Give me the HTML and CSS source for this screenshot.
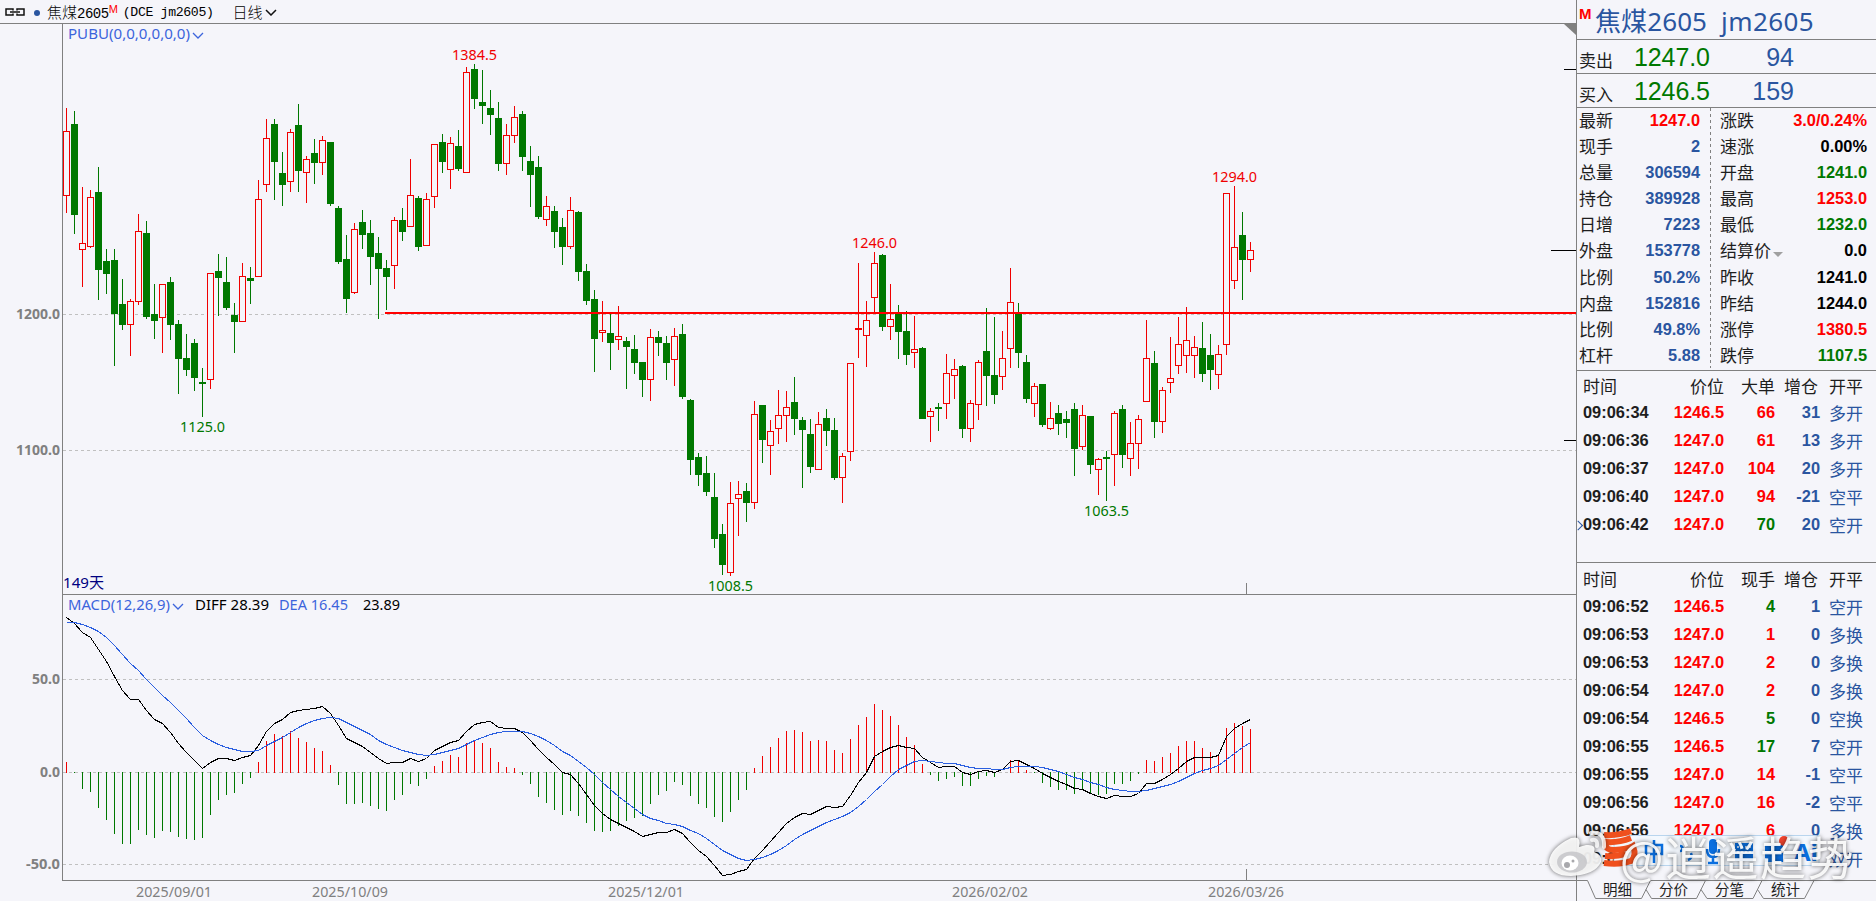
FILE: index.html
```
<!DOCTYPE html>
<html lang="zh-CN">
<head>
    <meta charset="UTF-8">
    <meta name="viewport" content="width=device-width, initial-scale=1.0">
    <title>焦煤2605 日线</title>
    <link rel="stylesheet" href="styles.css">
</head>
<body>

<div class="chart-side">
    <div class="toolbar">
        <svg class="link-icon" width="20" height="8" viewBox="0 0 20 8">
            <path d="M8 2.500V1H1v6h7v-1.500M12 2.500V1h7v6h-7v-1.500M5 4h10" />
        </svg>
        <span class="dot"></span>
        <span class="name">焦煤<span class="mono">2605</span></span><sup>M</sup>
        <span class="mono code">(DCE jm2605)</span>
        <span class="period">日线</span>
        <svg class="chev" width="12" height="7" viewBox="0 0 12 7"><path d="M1 1l5 5l5-5" /></svg>
    </div>
    <svg class="pane" id="price-pane" width="1576" height="571" viewBox="0 24 1576 571"></svg>
    <svg class="pane" id="macd-pane" width="1576" height="306" viewBox="0 595 1576 306"></svg>
</div>

<div class="quote-side">
    <div class="title"><b>M</b><span>焦煤2605</span><span>jm2605</span></div>
    <div class="order"><span>卖出</span><em>1247.0</em><i>94</i></div>
    <div class="order"><span>买入</span><em>1246.5</em><i>159</i></div>
    <div class="quotes">
        <div class="col" id="quote-left"></div>
        <div class="col" id="quote-right"></div>
    </div>
    <div class="trades big" id="big-trades"></div>
    <div class="trades" id="all-trades"></div>
    <div class="tabs">
        <svg width="300" height="21" viewBox="0 0 300 21">
            <path d="M0 .5H11.500L19.500 18.500H65.500L74.500 .5M70 9.500L75.500 18.500H120.500L129.500 .5M125 9.500L131 18.500H177L186 .5M181.500 9.500L187.500 18.500H228.500L238 .5M74.500 .5H300" />
        </svg>
        <div class="tab-names"><span>明细</span><span>分价</span><span>分笔</span><span>统计</span></div>
    </div>
</div>

<!-- 输入法工具条 -->
<div class="ime">
    <svg width="250" height="44" viewBox="0 0 250 44">
        <rect x="14" y="9.500" width="205" height="30" rx="3" fill="#f3f8fe" stroke="#b9d5ee" />
        <g class="ime-logo">
            <path d="M4 9Q18 10 31 5M31 12Q18 17 6 16Q4 24 14 24Q28 23 33 20Q37 30 31 35Q20 39 4 37M5 30Q16 31 26 28" />
        </g>
        <g class="ime-blue">
            <path d="M46 19h16v9h-16zM54 14v23" />
            <path d="M80 20a2.500 2.500 0 1 1 0 5M91 27q2 5-3 7" />
            <path d="M107 23q0 8 6 8t6-8M113 31v6M108 37h10" />
        </g>
        <rect x="109" y="13" width="8" height="15" rx="4" fill="#0a6fe0" />
        <path d="M135 17h18v18h-18z" fill="#0a6fe0" />
        <path d="M137 21h14M137 26h14" stroke="#f3f8fe" stroke-width="1.500" stroke-dasharray="2 2" />
        <path d="M165 19h18v6h-18zM165 27h8v9h-8zM175 27h8v9h-8z" fill="#0a6fe0" />
        <circle cx="184" cy="15" r="5" fill="#f0442e" />
        <text x="194" y="35" class="ime-ai">Ai</text>
    </svg>
</div>

<div class="watermark">
    <svg width="60" height="50" viewBox="0 0 60 50">
        <path d="M24 8Q3 18 2 32Q4 46 24 46Q48 45 54 32Q56 25 47 22Q50 14 39 15L32 17Q35 5 24 8Z" fill="#fff" fill-opacity=".9" />
        <ellipse cx="25" cy="32" rx="15" ry="10.500" fill="#c0c0c4" fill-opacity=".75" />
        <ellipse cx="23" cy="33" rx="8.500" ry="7.500" fill="#fff" />
        <circle cx="20" cy="35" r="3" fill="#a8a8ac" />
        <circle cx="26" cy="31" r="1.500" fill="#a8a8ac" />
        <path d="M44 3Q58 1 57 17M45 10Q51 9 50 16" class="wave" />
    </svg>
    <span>@逍遥趋势</span>
</div>

<script src="chart.js"></script>
</body>
</html>
```
FILE: styles.css
```
* {
    box-sizing: border-box;
}
body {
    margin: 0;
    display: flex;
    width: 1876px;
    height: 901px;
    overflow: hidden;
    position: relative;
    background-color: #f5f5fa;
    color: #1e1e1e;
    font-family: "Liberation Sans", "Noto Sans CJK SC", sans-serif;
}
.chart-side {
    width: 1576px;
    flex: none;
}
.toolbar {
    height: 24px;
    display: flex;
    align-items: center;
    border-bottom: 1px solid #808080;
    padding-left: 5px;
    font: 300 15px "Noto Sans CJK SC", sans-serif;
    color: #000;
}
.toolbar svg {
    fill: none;
    stroke: #111;
    stroke-width: 1.5;
}
.mono {
    font: 13.200px "Liberation Mono", monospace;
    letter-spacing: -0.35px;
}
.dot {
    width: 6px;
    height: 6px;
    border-radius: 50%;
    background-color: #2a55a0;
    margin: 2px 7px 0 9px;
}
.name .mono {
    font-size: 14px;
    letter-spacing: -0.5px;
}
.toolbar sup {
    color: #f00;
    font: 11px "Liberation Sans", sans-serif;
    align-self: flex-start;
    margin-top: 3px;
}
.code {
    margin-left: 5px;
    margin-top: 2px;
}
.period {
    margin-left: 19px;
}
.toolbar .chev {
    margin: 2px 0 0 2px;
}
.pane {
    display: block;
}
.pane text {
    font-family: "Noto Sans", "Noto Sans CJK SC", sans-serif;
    font-size: 15px;
}
.pane .axis {
    font-weight: bold;
    font-size: 14px;
    fill: #808080;
}
.pane .date {
    fill: #808080;
}
.frame {
    stroke: #808080;
    fill: none;
    shape-rendering: crispEdges;
}
.grid {
    stroke: #c0c0c0;
    stroke-dasharray: 3 3;
    shape-rendering: crispEdges;
}
.tick {
    stroke: #000;
    shape-rendering: crispEdges;
}
.support {
    fill: #f00;
}
.up {
    fill: #f00000;
}
.hollow {
    fill: #f5f5fa;
    stroke: #f00000;
}
.down {
    fill: #007800;
}
.diff, .dea {
    fill: none;
    stroke: #000;
    shape-rendering: crispEdges;
}
.dea {
    stroke: #2b5fe0;
}
.chev-blue {
    fill: none;
    stroke: #3c64dc;
    stroke-width: 1.3;
}

/* 右侧报价 */
.quote-side {
    width: 300px;
    flex: none;
    border-left: 1px solid #808080;
    display: flex;
    flex-direction: column;
}
.title {
    height: 40px;
    display: flex;
    border-bottom: 1px solid #808080;
    color: #2a55a0;
    font-size: 26px;
    line-height: 42px;
}
.title span {
    font-family: "Noto Sans", "Noto Sans CJK SC", sans-serif;
    letter-spacing: 0.1px;
    margin-right: 14px;
}
.title span:last-child {
    letter-spacing: 0.4px;
}
.title b {
    color: #f00;
    font: bold 15px/28px "Liberation Sans", sans-serif;
    width: 18px;
    padding-left: 2px;
}
.order {
    height: 34px;
    display: flex;
    border-bottom: 1px solid #808080;
    padding-left: 2px;
    line-height: 35px;
}
.order span {
    width: 55px;
    font: 17px/40px "Noto Sans CJK SC", sans-serif;
}
.order em, .order i {
    font-style: normal;
    font-size: 25px;
}
.order em {
    width: 77px;
    color: #007800;
    letter-spacing: -0.1px;
}
.order i {
    width: 83px;
    text-align: right;
    color: #2a55a0;
}
.quotes {
    height: 263px;
    display: flex;
    border-bottom: 1px solid #808080;
}
.col {
    width: 134px;
    padding: 0 11px 0 2px;
    background: repeating-linear-gradient(#808080 0 3px, transparent 3px 6px) right top / 1px 260px no-repeat;
}
.col + .col {
    width: 165px;
    padding: 0 9px 0 9px;
    background: none;
}
.quote {
    height: 26.100px;
    display: flex;
    justify-content: space-between;
    font-size: 16.4px;
    line-height: 25px;
    font-weight: bold;
}
.quote span, .trade span:last-child, .head span {
    font: 17px/23px "Noto Sans CJK SC", sans-serif;
}
.quote .more::after {
    content: "";
    display: inline-block;
    border: 5.500px solid transparent;
    border-top-color: #a0a0a0;
    border-bottom: 0;
    margin-left: 2px;
}
.red {
    color: #f00;
}
.green {
    color: #007800;
}
.blue {
    color: #2a55a0;
}
.black {
    color: #000;
}
.trades {
    padding-left: 6px;
    padding-top: 4px;
    height: 317px;
}
.trades.big {
    height: 192px;
    padding-top: 3px;
    border-bottom: 1px solid #808080;
}
#all-trades .head {
    height: 26px;
}
.trade {
    position: relative;
    display: grid;
    grid-template-columns: 68px 73px 51px 45px 34px;
    height: 28px;
    font-size: 16.4px;
    line-height: 27px;
    font-weight: bold;
    text-align: right;
}
.trade span:nth-child(4) {
    color: #2a55a0;
}
.trade span:first-child {
    text-align: left;
}
.trade span:last-child {
    color: #2a55a0;
    line-height: 27px;
    margin-left: 8px;
    width: 35px;
}
.head {
    height: 25px;
}
.head span, .head span:last-child, .head span:nth-child(4) {
    color: #1e1e1e;
    line-height: 23px;
}
.head span:nth-child(4) {
    margin-right: 2px;
}
.marker::before {
    content: "";
    position: absolute;
    left: -7px;
    top: 11px;
    width: 6px;
    height: 6px;
    border: solid #2a55a0;
    border-width: 1px 1px 0 0;
    transform: rotate(45deg) translate(-1px, 1px);
}
.tabs {
    height: 21px;
    display: grid;
    margin-left: -1px;
}
.tabs > * {
    grid-area: 1 / 1;
}
.tabs path {
    fill: none;
    stroke: #808080;
}
.tab-names {
    display: flex;
    gap: 27px;
    padding-left: 27px;
    font: 14.500px/17px "Noto Sans CJK SC", sans-serif;
}

/* 浮层 */
.ime {
    position: absolute;
    left: 1600px;
    top: 826px;
}
.ime-logo {
    fill: none;
    stroke: #f0501e;
    stroke-width: 6;
}
.ime-blue {
    fill: none;
    stroke: #0a6fe0;
    stroke-width: 2.500;
}
.ime-ai {
    font: bold 24px "Noto Sans", sans-serif;
    fill: #0a6fe0;
}
.watermark {
    position: absolute;
    left: 1547px;
    top: 830px;
    display: flex;
    filter: drop-shadow(0 0 2px rgba(0, 0, 0, 0.65));
}
.watermark span {
    margin-left: 13px;
    font: 46px/50px "Noto Sans CJK SC", sans-serif;
    letter-spacing: 1.500px;
    color: rgba(255, 255, 255, 0.9);
    white-space: nowrap;
}
.wave {
    fill: none;
    stroke: #fff;
    stroke-opacity: 0.8;
    stroke-width: 4;
    stroke-linecap: round;
}
```
FILE: chart.js
```
const NS = 'http://www.w3.org/2000/svg';
const pricePane = document.getElementById('price-pane');
const macdPane = document.getElementById('macd-pane');
const firstX = 66;  // 第一根K线中心
const step = 8;     // K线间距
const zeroY = 772;

// 每根K线: 颜色 最高 实体上沿 实体下沿 最低
const candles = `
r108,131,196,213 g111,124,215,234 r187,243,250,287 r190,197,247,248 g167,192,270,300 g249,261,274,294
g249,260,314,366 g279,304,325,330 r299,301,325,356 r214,231,302,305 g221,233,317,319 g284,314,321,339
r284,284,318,353 g277,282,325,340 g320,324,359,394 g334,358,370,376 g339,343,378,391 g368,382,384,417
r273,273,380,389 g254,271,278,316 g257,282,308,310 g303,315,322,353 r263,276,322,322 g267,278,281,304
r180,199,277,277 r119,138,185,192 g119,124,162,200 g152,173,185,206 r129,132,182,192 g104,125,171,192
r156,159,173,203 g139,153,163,184 r136,140,163,175 g142,142,204,206 g206,208,262,264 g235,259,299,313
r223,229,293,294 g210,222,235,249 g220,233,257,285 g237,253,269,319 g260,268,277,310 r217,220,266,289
g208,220,232,241 r159,195,227,227 g196,198,247,251 r193,199,246,246 r144,144,197,208 g134,142,162,173
r137,143,170,189 g130,146,169,171 r67,72,173,173 g64,69,99,109 g70,102,106,124 g90,108,115,135
g102,118,164,171 r124,135,164,175 r106,117,136,143 g111,114,157,171 g146,161,175,207 g156,167,217,219
r196,206,220,226 g206,211,232,248 g218,227,247,265 r197,210,247,249 g211,212,272,281 g264,271,301,305
g290,299,339,372 r301,330,333,342 g314,333,343,370 r306,336,340,350 g337,341,347,389 g335,349,363,374
g362,362,380,397 r329,337,380,401 g331,337,343,356 g336,343,363,380 r328,336,360,386 g324,334,397,399
g399,400,460,475 g453,457,475,486 g456,473,492,496 g473,497,539,548 g524,534,565,575 r482,503,573,576
r481,494,499,536 g483,491,503,522 r401,414,503,509 g405,405,440,463 r420,431,446,475 r390,415,429,444
r391,407,416,442 g377,402,419,435 g417,420,430,488 g419,434,467,473 r412,424,470,470 g409,418,431,446
g418,430,478,480 r453,456,478,503 r363,363,452,461 r263,328,330,358 r301,320,336,367 r252,263,298,313
g254,255,327,331 r284,319,327,340 g305,313,332,359 g311,331,355,365 r316,349,353,368 g347,348,419,419
r408,411,417,442 g403,407,409,431 r354,373,404,419 r359,369,376,399 g365,366,429,438 r400,403,429,442
r360,362,405,420 g308,351,376,406 g317,375,395,404 r331,358,377,390 r268,302,349,368 g303,313,353,368
g355,362,399,403 r383,386,404,417 g384,384,425,427 r402,418,429,430 g405,413,424,435 g411,419,423,438
g403,409,449,476 r405,415,447,450 g416,416,465,474 r458,459,470,495 g451,457,459,501 r411,413,455,486
g405,409,455,468 r422,443,459,476 r415,419,444,469 r320,358,402,402 g351,363,422,438 r387,390,422,433
r337,378,383,393 r317,344,366,374 r307,340,356,373 r336,347,356,378 g322,348,374,382 g334,355,370,390
r345,354,375,389 r193,193,345,355 r186,247,281,289 g212,235,260,300 r242,250,260,272`.trim().split(/\s+/);

// MACD 柱的端点
const bars = [
    762, 773, 789, 792, 808, 820, 834, 844, 844, 830, 835, 838, 831, 832, 837, 839, 840, 838, 815, 800,
    795, 793, 784, 778, 762, 741, 734, 736, 731, 738, 742, 748, 751, 765, 785, 804, 804, 803, 806, 809,
    811, 800, 795, 784, 786, 779, 766, 761, 755, 757, 743, 740, 743, 748, 762, 767, 768, 775, 784, 797,
    803, 810, 815, 811, 816, 823, 831, 832, 831, 826, 821, 818, 816, 804, 795, 791, 782, 785, 796, 804,
    808, 817, 822, 812, 800, 790, 768, 756, 747, 738, 731, 730, 732, 741, 740, 741, 750, 753, 739, 725,
    717, 704, 710, 716, 725, 737, 745, 764, 775, 781, 779, 777, 786, 786, 779, 776, 777, 772, 760, 760,
    770, 773, 783, 787, 790, 790, 794, 790, 793, 795, 794, 784, 784, 781, 774, 760, 761, 757, 753, 746,
    741, 741, 748, 752, 755, 728, 723, 726, 729
];
const diff = [
    617, 623, 632, 637, 649, 661, 676, 690, 699, 699, 710, 719, 723, 732, 743, 752, 760, 768, 762, 758,
    758, 760, 757, 755, 745, 731, 723, 719, 712, 710, 709, 708, 706, 713, 725, 738, 742, 746, 752, 758,
    763, 762, 762, 758, 761, 758, 750, 746, 742, 740, 731, 724, 722, 721, 727, 728, 728, 732, 740, 749,
    757, 764, 772, 774, 783, 794, 805, 813, 819, 823, 827, 831, 836, 834, 832, 832, 829, 833, 842, 850,
    856, 865, 875, 874, 871, 869, 858, 850, 841, 832, 823, 817, 813, 814, 810, 806, 807, 806, 795, 782,
    772, 756, 751, 747, 745, 747, 748, 757, 762, 767, 766, 766, 772, 774, 771, 770, 772, 769, 761, 760,
    764, 768, 773, 777, 781, 784, 788, 789, 793, 796, 798, 795, 796, 796, 793, 783, 783, 779, 774, 768,
    761, 757, 757, 757, 755, 736, 728, 723, 719
];
const dea = [
    622, 622, 624, 627, 631, 637, 645, 654, 663, 670, 679, 687, 695, 702, 710, 718, 727, 735, 740, 744,
    747, 749, 751, 751, 750, 745, 741, 737, 732, 727, 723, 720, 718, 717, 718, 722, 726, 730, 734, 740,
    744, 747, 750, 752, 754, 755, 754, 752, 750, 748, 744, 740, 737, 734, 732, 731, 731, 731, 733, 736,
    740, 745, 751, 755, 761, 767, 774, 782, 789, 796, 802, 808, 814, 818, 820, 823, 824, 826, 830, 833,
    838, 844, 850, 854, 858, 860, 859, 857, 854, 850, 845, 839, 834, 830, 826, 822, 819, 816, 812, 806,
    799, 791, 784, 776, 769, 765, 761, 760, 761, 762, 763, 763, 765, 767, 768, 768, 769, 769, 767, 766,
    766, 766, 767, 769, 771, 774, 777, 779, 782, 784, 787, 789, 790, 791, 791, 790, 788, 786, 784, 781,
    777, 773, 770, 768, 765, 759, 753, 747, 742
];

function add(pane, tag, attrs, text) {
    const el = document.createElementNS(NS, tag);
    for (const key in attrs) el.setAttribute(key, attrs[key]);
    if (text) el.textContent = text;
    pane.appendChild(el);
}

function line(pane, cls, x1, y1, x2, y2) {
    add(pane, 'path', { class: cls, d: `M${x1} ${y1}L${x2} ${y2}` });
}

function rect(pane, cls, x, y, width, height) {
    if (height > 0) add(pane, 'rect', { class: cls, x, y, width, height });
}

function label(pane, text, x, y, width, fill, cls) {
    const attrs = { x, y, textLength: width, lengthAdjust: 'spacingAndGlyphs' };
    if (fill) attrs.fill = fill;
    if (cls) attrs.class = cls;
    add(pane, 'text', attrs, text);
}

function drawPrice() {
    line(pricePane, 'grid', 63, 314.5, 1576, 314.5);
    line(pricePane, 'grid', 63, 450.5, 1576, 450.5);
    candles.forEach((c, i) => {
        const [high, top, bottom, low] = c.slice(1).split(',').map(Number);
        const x = firstX + i * step;
        const cls = c[0] === 'r' ? 'up' : 'down';
        rect(pricePane, cls, x, high, 1, top - high);
        rect(pricePane, cls, x, bottom, 1, low - bottom);
        if (cls === 'up' && bottom - top > 2) {
            rect(pricePane, 'hollow', x - 2.5, top + 0.5, 6, bottom - top - 1);
        } else {
            rect(pricePane, cls, x - 3, top, 7, bottom - top);
        }
    });
    rect(pricePane, 'support', 385, 312, 1191, 2);
    line(pricePane, 'frame', 62.5, 24, 62.5, 595);
    line(pricePane, 'frame', 62, 594.5, 1576, 594.5);
    line(pricePane, 'frame', 1246.5, 583, 1246.5, 594);
    line(pricePane, 'tick', 1564, 69.5, 1576, 69.5);
    line(pricePane, 'tick', 1551, 250.5, 1576, 250.5);
    line(pricePane, 'tick', 1564, 440.5, 1576, 440.5);
    add(pricePane, 'path', { d: 'M1564 24H1576V35Z', fill: '#808080' });

    label(pricePane, 'PUBU(0,0,0,0,0,0)', 68, 39, 122, '#3c64dc');
    add(pricePane, 'path', { class: 'chev-blue', d: 'M193 33l5 5l5-5' });
    label(pricePane, '1200.0', 16, 319, 44, '', 'axis');
    label(pricePane, '1100.0', 16, 455, 44, '', 'axis');
    label(pricePane, '1384.5', 452, 60, 45, '#f00000');
    label(pricePane, '1125.0', 180, 432, 45, '#007800');
    label(pricePane, '1008.5', 708, 591, 45, '#007800');
    label(pricePane, '1246.0', 852, 248, 45, '#f00000');
    label(pricePane, '1063.5', 1084, 516, 45, '#007800');
    label(pricePane, '1294.0', 1212, 182, 45, '#f00000');
    label(pricePane, '149天', 63, 588, 41, '#000080');
}

function drawMacd() {
    [679.5, 772.5, 864.5].forEach((y) => line(macdPane, 'grid', 63, y, 1576, y));
    bars.forEach((y, i) => {
        const x = firstX + i * step;
        if (y < zeroY) rect(macdPane, 'up', x, y, 1, zeroY + 1 - y);
        else rect(macdPane, 'down', x, zeroY, 1, y - zeroY);
    });
    const points = (data) => data.map((y, i) => `${firstX + i * step + 0.5},${y + 0.5}`).join(' ');
    add(macdPane, 'polyline', { class: 'diff', points: points(diff) });
    add(macdPane, 'polyline', { class: 'dea', points: points(dea) });
    line(macdPane, 'frame', 62.5, 595, 62.5, 880);
    line(macdPane, 'frame', 62, 880.5, 1576, 880.5);
    line(macdPane, 'frame', 1246.5, 869, 1246.5, 880);

    label(macdPane, 'MACD(12,26,9)', 68, 610, 102, '#3c64dc');
    add(macdPane, 'path', { class: 'chev-blue', d: 'M173 604l5 5l5-5' });
    label(macdPane, 'DIFF 28.39', 195, 610, 74, '#000');
    label(macdPane, 'DEA 16.45', 279, 610, 69, '#3c64dc');
    label(macdPane, '23.89', 363, 610, 37, '#000');
    label(macdPane, '50.0', 32, 684, 28, '', 'axis');
    label(macdPane, '0.0', 40, 777, 20, '', 'axis');
    label(macdPane, '-50.0', 26, 869, 34, '', 'axis');
    label(macdPane, '2025/09/01', 136, 897, 76, '', 'date');
    label(macdPane, '2025/10/09', 312, 897, 76, '', 'date');
    label(macdPane, '2025/12/01', 608, 897, 76, '', 'date');
    label(macdPane, '2026/02/02', 952, 897, 76, '', 'date');
    label(macdPane, '2026/03/26', 1208, 897, 76, '', 'date');
}

function fillQuotes(id, rows) {
    document.getElementById(id).innerHTML = rows.map(([name, value, color]) =>
        `<div class="quote"><span${name === '结算价' ? ' class="more"' : ''}>${name}</span><b class="${color}">${value}</b></div>`
    ).join('');
}

function fillTrades(id, third, rows) {
    const head = `<div class="trade head"><span>时间</span><span>价位</span><span>${third}</span><span>增仓</span><span>开平</span></div>`;
    document.getElementById(id).innerHTML = head + rows.map(([time, price, vol, color, inc, type], i) =>
        `<div class="trade${i === rows.length - 1 ? ' marker' : ''}"><span>${time}</span><span class="red">${price}</span><span class="${color}">${vol}</span><span>${inc}</span><span>${type}</span></div>`
    ).join('');
}

drawPrice();
drawMacd();

fillQuotes('quote-left', [
    ['最新', '1247.0', 'red'], ['现手', '2', 'blue'], ['总量', '306594', 'blue'], ['持仓', '389928', 'blue'],
    ['日增', '7223', 'blue'], ['外盘', '153778', 'blue'], ['比例', '50.2%', 'blue'], ['内盘', '152816', 'blue'],
    ['比例', '49.8%', 'blue'], ['杠杆', '5.88', 'blue']
]);
fillQuotes('quote-right', [
    ['涨跌', '3.0/0.24%', 'red'], ['速涨', '0.00%', 'black'], ['开盘', '1241.0', 'green'], ['最高', '1253.0', 'red'],
    ['最低', '1232.0', 'green'], ['结算价', '0.0', 'black'], ['昨收', '1241.0', 'black'], ['昨结', '1244.0', 'black'],
    ['涨停', '1380.5', 'red'], ['跌停', '1107.5', 'green']
]);
fillTrades('big-trades', '大单', [
    ['09:06:34', '1246.5', 66, 'red', 31, '多开'],
    ['09:06:36', '1247.0', 61, 'red', 13, '多开'],
    ['09:06:37', '1247.0', 104, 'red', 20, '多开'],
    ['09:06:40', '1247.0', 94, 'red', -21, '空平'],
    ['09:06:42', '1247.0', 70, 'green', 20, '空开']
]);
fillTrades('all-trades', '现手', [
    ['09:06:52', '1246.5', 4, 'green', 1, '空开'],
    ['09:06:53', '1247.0', 1, 'red', 0, '多换'],
    ['09:06:53', '1247.0', 2, 'red', 0, '多换'],
    ['09:06:54', '1247.0', 2, 'red', 0, '多换'],
    ['09:06:54', '1246.5', 5, 'green', 0, '空换'],
    ['09:06:55', '1246.5', 17, 'green', 7, '空开'],
    ['09:06:55', '1247.0', 14, 'red', -1, '空平'],
    ['09:06:56', '1247.0', 16, 'red', -2, '空平'],
    ['09:06:56', '1247.0', 6, 'red', 0, '多换'],
    ['09:06:56', '', '', 'red', '', '双开']
]);
```
